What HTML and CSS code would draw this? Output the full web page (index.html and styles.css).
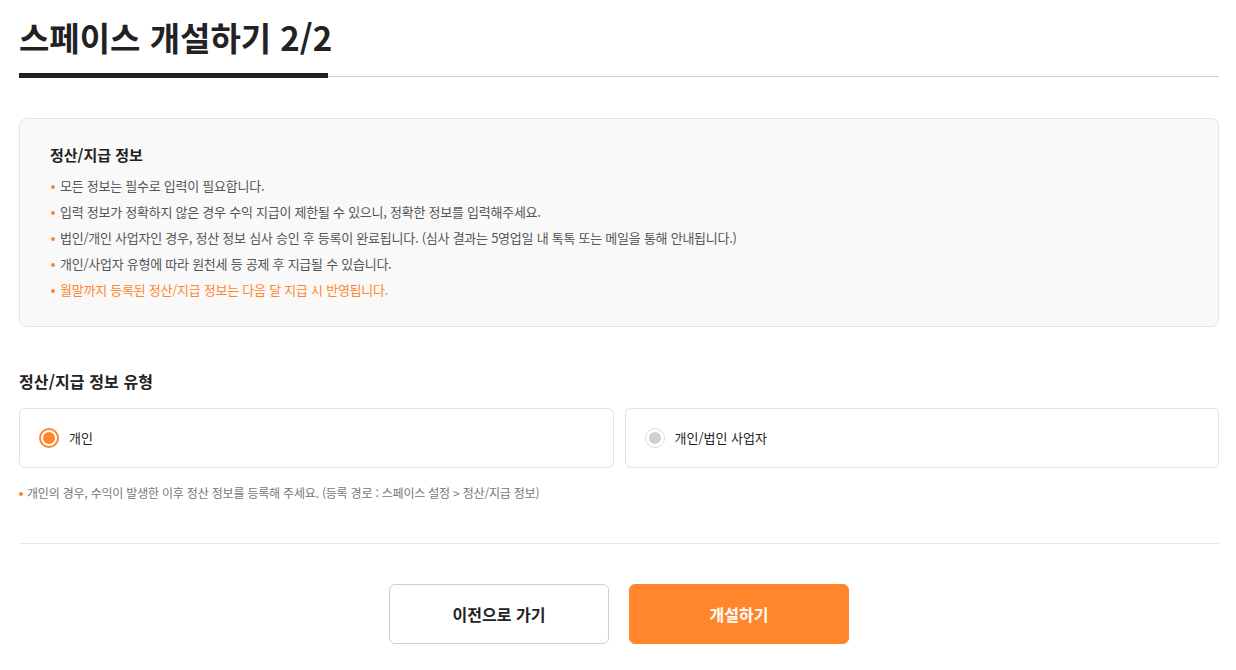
FILE: index.html
```html
<!DOCTYPE html>
<html lang="ko">
<head>
<meta charset="utf-8">
<title>스페이스 개설하기</title>
<link rel="stylesheet" href="styles.css">
</head>
<body>
<div class="page">
  <header class="header">
    <h1 class="title">스페이스 개설하기 2/2</h1>
    <div class="tabline"><div class="tabbar"></div><div class="tabrest"></div></div>
  </header>

  <section class="infobox">
    <h2 class="info-title">정산/지급 정보</h2>
    <ul class="info-list">
      <li>모든 정보는 필수로 입력이 필요합니다.</li>
      <li>입력 정보가 정확하지 않은 경우 수익 지급이 제한될 수 있으니, 정확한 정보를 입력해주세요.</li>
      <li>법인/개인 사업자인 경우, 정산 정보 심사 승인 후 등록이 완료됩니다. (심사 결과는 5영업일 내 톡톡 또는 메일을 통해 안내됩니다.)</li>
      <li>개인/사업자 유형에 따라 원천세 등 공제 후 지급될 수 있습니다.</li>
      <li class="accent">월말까지 등록된 정산/지급 정보는 다음 달 지급 시 반영됩니다.</li>
    </ul>
  </section>

  <h3 class="section-title">정산/지급 정보 유형</h3>
  <div class="options">
    <label class="option"><span class="radio checked"></span><span class="option-text">개인</span></label>
    <label class="option"><span class="radio"></span><span class="option-text">개인/법인 사업자</span></label>
  </div>
  <p class="note">개인의 경우, 수익이 발생한 이후 정산 정보를 등록해 주세요. (등록 경로 : 스페이스 설정 &gt; 정산/지급 정보)</p>

  <div class="divider"></div>

  <div class="actions">
    <button class="btn btn-outline">이전으로 가기</button>
    <button class="btn btn-primary">개설하기</button>
  </div>
</div>
</body>
</html>
```

FILE: styles.css
```css
* { box-sizing: border-box; }
html, body { margin: 0; padding: 0; background: #fff; }
body {
  font-family: "Noto Sans CJK KR", "Noto Sans", "Liberation Sans", sans-serif;
  color: #222;
}
.page {
  width: 1200px;
  margin-left: 19px;
  padding-top: 15px;
}
.title {
  margin: 0 0 14px;
  font-size: 33px;
  line-height: 44px;
  font-weight: 700;
  color: #222;
  letter-spacing: 0;
}
.tabline {
  display: flex;
  align-items: flex-end;
  height: 5px;
}
.tabbar {
  width: 309px;
  height: 5px;
  background: #222;
}
.tabrest {
  flex: 1;
  height: 1px;
  margin-bottom: 1px;
  background: #cfcfcf;
}
.infobox {
  margin-top: 40px;
  background: #f9f9f9;
  border: 1px solid #e5e5e5;
  border-radius: 8px;
  padding: 25px 30px 23px;
}
.info-title {
  margin: 0 0 7px;
  font-size: 15px;
  line-height: 22px;
  font-weight: 700;
  color: #222;
}
.info-list {
  list-style: none;
  margin: 0;
  padding: 0;
}
.info-list li {
  position: relative;
  padding-left: 10px;
  font-size: 13px;
  line-height: 26px;
  color: #555;
  letter-spacing: -0.25px;
}
.info-list li::before {
  content: "";
  position: absolute;
  left: 1px;
  top: 12px;
  width: 4px;
  height: 4px;
  border-radius: 50%;
  background: #ff862b;
}
.info-list li.accent { color: #ff862b; }
.section-title {
  margin: 42px 0 15px;
  font-size: 16px;
  line-height: 24px;
  font-weight: 700;
  color: #222;
  letter-spacing: 0.1px;
}
.options {
  display: flex;
  gap: 11px;
}
.option {
  flex: 1;
  height: 60px;
  display: flex;
  align-items: center;
  gap: 10px;
  padding-left: 19px;
  border: 1px solid #e2e2e2;
  border-radius: 6px;
  background: #fff;
}
.radio {
  width: 20px;
  height: 20px;
  border-radius: 50%;
  border: 1px solid #dcdcdc;
  display: flex;
  align-items: center;
  justify-content: center;
}
.radio::after {
  content: "";
  width: 12px;
  height: 12px;
  border-radius: 50%;
  background: #cfcfcf;
}
.radio.checked { border: 2px solid #ff862b; }
.radio.checked::after { background: #ff862b; }
.option-text {
  font-size: 13px;
  line-height: 20px;
  color: #222;
}
.note {
  position: relative;
  margin: 16px 0 0;
  padding-left: 8px;
  font-size: 12px;
  line-height: 18px;
  color: #777;
  letter-spacing: -0.2px;
}
.note::before {
  content: "";
  position: absolute;
  left: 0;
  top: 8px;
  width: 4px;
  height: 4px;
  border-radius: 50%;
  background: #ff862b;
}
.divider {
  margin-top: 41px;
  height: 1px;
  background: #e8e8e8;
}
.actions {
  margin-top: 40px;
  display: flex;
  justify-content: center;
  gap: 20px;
}
.btn {
  width: 220px;
  height: 60px;
  border-radius: 6px;
  font-family: inherit;
  font-size: 16px;
  font-weight: 700;
  cursor: pointer;
}
.btn-outline {
  background: #fff;
  border: 1px solid #cfcfcf;
  color: #222;
}
.btn-primary {
  background: #ff862b;
  border: 1px solid #ff862b;
  color: #fff;
}
```
